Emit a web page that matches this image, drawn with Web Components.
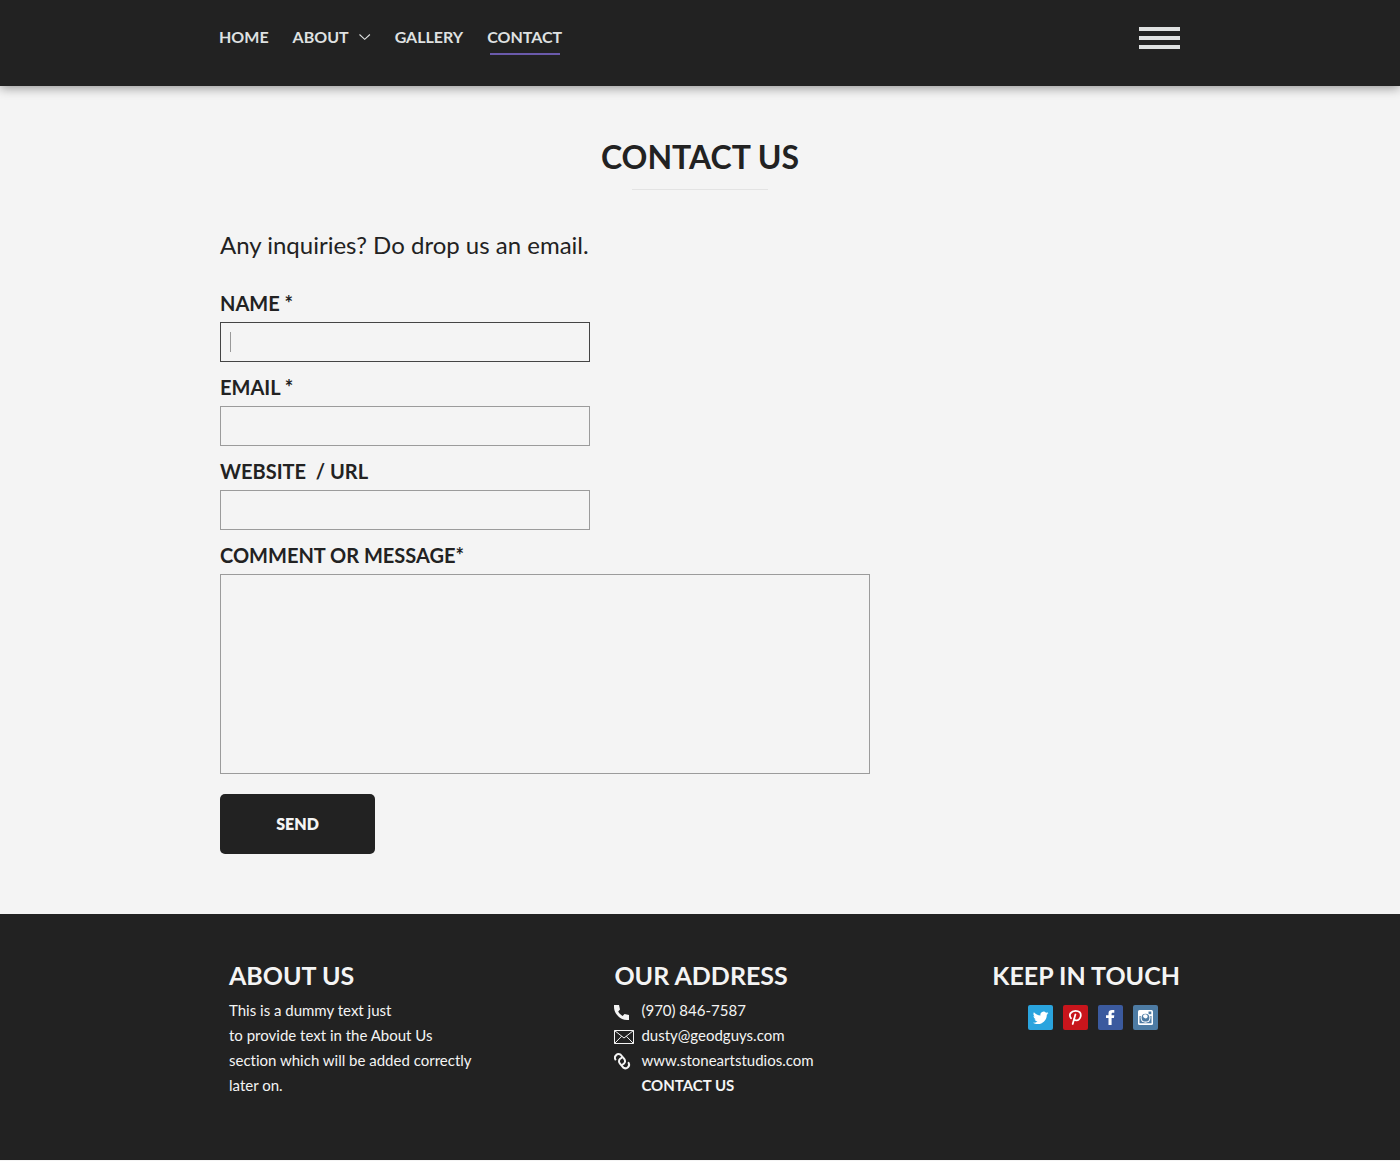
<!DOCTYPE html>
<html lang="en">
<head>
<meta charset="utf-8">
<meta name="viewport" content="width=device-width, initial-scale=1">
<title>Contact Us</title>
<style>
  body {
    margin: 0;
    background: #f4f4f4;
    color: #222;
    font-family: Lato, sans-serif;
    font-variant-ligatures: none;
  }

  main {
    box-sizing: border-box;
    max-width: 960px;
    margin: 0 auto;
  }

  site-footer p {
    margin: 0;
  }
</style>
</head>
<body>
  <site-header>
    <nav-link href="#home">HOME</nav-link>
    <nav-link href="#about" menu>ABOUT</nav-link>
    <nav-link href="#gallery">GALLERY</nav-link>
    <nav-link href="#contact" active>CONTACT</nav-link>
  </site-header>

  <main>
    <page-title>CONTACT US</page-title>
    <contact-form>Any inquiries? Do drop us an email.</contact-form>
  </main>

  <site-footer>
    <footer-column heading="ABOUT US">
      <p>This is a dummy text just<br>to provide text in the About Us<br>section which will be added correctly<br>later on.</p>
    </footer-column>
    <footer-column heading="OUR ADDRESS">
      <contact-line icon="phone" href="tel:9708467587">(970) 846-7587</contact-line>
      <contact-line icon="mail" href="mailto:dusty@geodguys.com">dusty@geodguys.com</contact-line>
      <contact-line icon="link" href="#site">www.stoneartstudios.com</contact-line>
      <contact-line href="#contact" strong>CONTACT US</contact-line>
    </footer-column>
    <footer-column heading="KEEP IN TOUCH">
      <social-links></social-links>
    </footer-column>
  </site-footer>

<script>
class SiteHeader extends HTMLElement {
  constructor() {
    super();
    this.attachShadow({ mode: 'open' });
    this.shadowRoot.innerHTML = `
      <style>
        :host {
          display: block;
          position: relative;
          background: #222;
          box-shadow: 0 2px 10px rgba(0, 0, 0, 0.4);
        }

        header {
          display: flex;
          justify-content: space-between;
          align-items: flex-start;
          box-sizing: border-box;
          max-width: 962px;
          min-height: 86px;
          margin: 0 auto;
          padding: 26px 1px 0 0;
        }

        nav {
          display: flex;
          gap: 24px;
        }

        button {
          display: flex;
          flex-direction: column;
          gap: 5px;
          width: 41px;
          margin: 0;
          padding: 1px 0;
          border: 0;
          background: none;
          cursor: pointer;
        }

        button span {
          height: 4px;
          width: 100%;
          background: #dfe1e1;
        }
      </style>
      <header>
        <nav><slot></slot></nav>
        <button type="button" aria-label="Menu"><span></span><span></span><span></span></button>
      </header>
    `;
  }
}

class NavLink extends HTMLElement {
  constructor() {
    super();
    this.attachShadow({ mode: 'open' });
  }

  connectedCallback() {
    const chevron = `
      <svg width="12" height="8" viewBox="0 0 12 8" aria-hidden="true">
        <path d="M.5 1.500 5.700 6.300l5.200-4.800" fill="none" stroke="#dfe1e1" stroke-width="1.100"/>
      </svg>`;

    this.shadowRoot.innerHTML = `
      <style>
        :host {
          display: block;
        }

        a {
          display: flex;
          align-items: center;
          gap: 10px;
          color: #dfe1e1;
          font-size: 16px;
          font-weight: 700;
          line-height: 21px;
          text-decoration: none;
        }

        :host([active]) a::after {
          content: '';
          width: 70px;
          height: 2px;
          background: #6a5aab;
        }

        :host([active]) a {
          flex-direction: column;
          gap: 6px;
        }
      </style>
      <a href="${this.getAttribute('href')}"><slot></slot>${this.hasAttribute('menu') ? chevron : ''}</a>
    `;
  }
}

class PageTitle extends HTMLElement {
  constructor() {
    super();
    this.attachShadow({ mode: 'open' });
    this.shadowRoot.innerHTML = `
      <style>
        :host {
          display: block;
          padding-top: 51px;
        }

        h1 {
          margin: 0;
          font-size: 32px;
          font-weight: 700;
          line-height: 40px;
          text-align: center;
        }

        hr {
          width: 136px;
          height: 1px;
          margin: 12px auto 0;
          border: 0;
          background: #e3e3e3;
        }
      </style>
      <h1><slot></slot></h1>
      <hr>
    `;
  }
}

class FormField extends HTMLElement {
  constructor() {
    super();
    this.attachShadow({ mode: 'open' });
  }

  connectedCallback() {
    const label = this.getAttribute('label');
    const control = this.hasAttribute('multiline')
      ? '<textarea id="control"></textarea>'
      : `<input id="control" type="${this.getAttribute('type') || 'text'}">`;

    this.shadowRoot.innerHTML = `
      <style>
        :host {
          display: block;
          max-width: 370px;
        }

        :host([multiline]) {
          max-width: 650px;
        }

        label {
          display: block;
          margin-bottom: 7px;
          font-size: 20px;
          font-weight: 700;
          line-height: 24px;
          white-space: pre;
        }

        input,
        textarea {
          display: block;
          box-sizing: border-box;
          width: 100%;
          height: 40px;
          margin: 0;
          padding: 0 9px;
          border: 1px solid #9b9b9b;
          border-radius: 0;
          outline: none;
          background: transparent;
          color: inherit;
          font: 16px Lato, sans-serif;
        }

        textarea {
          height: 200px;
          padding: 9px;
          resize: none;
        }

        /* current field: darker border and a resting text cursor */
        :host([current]) input {
          border-color: #444;
          background: linear-gradient(#999, #999) 9px center / 1px 20px no-repeat;
        }
      </style>
      <label for="control">${label}</label>
      ${control}
    `;
  }
}

class ContactForm extends HTMLElement {
  constructor() {
    super();
    this.attachShadow({ mode: 'open' });
    this.shadowRoot.innerHTML = `
      <style>
        :host {
          display: block;
          padding: 40px 0 60px;
        }

        p {
          margin: 0 0 31px;
          font-size: 24px;
          line-height: 30px;
        }

        form {
          display: grid;
          gap: 13px;
        }

        button {
          width: 155px;
          height: 60px;
          margin: 7px 0 0;
          padding: 0 0 2px;
          border: 0;
          border-radius: 5px;
          background: #222;
          color: #f4f4f4;
          font: 800 16px Lato, sans-serif;
          cursor: pointer;
        }
      </style>
      <p><slot></slot></p>
      <form>
        <form-field label="NAME *" current></form-field>
        <form-field label="EMAIL *" type="email"></form-field>
        <form-field label="WEBSITE  / URL" type="url"></form-field>
        <form-field label="COMMENT OR MESSAGE*" multiline></form-field>
        <button type="submit">SEND</button>
      </form>
    `;

    this.shadowRoot.querySelector('form').addEventListener('submit', (e) => e.preventDefault());
  }
}

class SiteFooter extends HTMLElement {
  constructor() {
    super();
    this.attachShadow({ mode: 'open' });
    this.shadowRoot.innerHTML = `
      <style>
        :host {
          display: block;
          background: #222;
          color: #f4f4f4;
        }

        footer {
          display: grid;
          grid-template-columns: 51fr 50fr auto;
          box-sizing: border-box;
          max-width: 960px;
          min-height: 246px;
          margin: 0 auto;
          padding: 45px 0 60px 9px;
        }
      </style>
      <footer><slot></slot></footer>
    `;
  }
}

class FooterColumn extends HTMLElement {
  constructor() {
    super();
    this.attachShadow({ mode: 'open' });
  }

  connectedCallback() {
    this.shadowRoot.innerHTML = `
      <style>
        :host {
          display: block;
          font-size: 15px;
          line-height: 25px;
        }

        h2 {
          margin: 0 0 7px;
          font-size: 25px;
          font-weight: 700;
          line-height: 32px;
        }
      </style>
      <h2>${this.getAttribute('heading')}</h2>
      <slot></slot>
    `;
  }
}

class ContactLine extends HTMLElement {
  constructor() {
    super();
    this.attachShadow({ mode: 'open' });

    this.icons = {
      phone: '<path d="M0 5h5l1 4.600-1.800 1.900c1.100 2.100 2.500 3.400 4.400 4.400l1.900-1.900L15 15v5h-2C6 20 0 13.500 0 7z" fill="#f4f4f4"/>',
      mail: '<path d="M.5 5.500h19v13H.5zM.5 5.500 10 13l9.500-7.500M.5 18.500l7.200-7.300M19.500 18.500l-7.200-7.300" fill="none" stroke="#f4f4f4"/>',
      link: `<g fill="none" stroke="#f4f4f4" stroke-width="2" stroke-linecap="round">
          <path d="M1.400 9.500C-.4 6.500 3.200 2.600 6.600 4.700l3.600 4.200c1.700 2.300.6 4.700-1.700 5.700"/>
          <path d="M14.600 12.900c1.800 3-1.800 6.900-5.200 4.800l-3.600-4.200c-1.700-2.300-.6-4.700 1.700-5.700"/>
        </g>`
    };
  }

  connectedCallback() {
    const icon = this.icons[this.getAttribute('icon')] || '';

    this.shadowRoot.innerHTML = `
      <style>
        :host {
          display: block;
        }

        a {
          display: flex;
          gap: 7px;
          color: inherit;
          text-decoration: none;
        }

        :host([strong]) {
          font-weight: 700;
        }
      </style>
      <a href="${this.getAttribute('href')}">
        <svg width="20" height="25" viewBox="0 -2 20 25" aria-hidden="true">${icon}</svg>
        <span><slot></slot></span>
      </a>
    `;
  }
}

class SocialLinks extends HTMLElement {
  constructor() {
    super();
    this.attachShadow({ mode: 'open' });

    this.networks = [
      {
        name: 'Twitter',
        color: '#2aa4de',
        art: '<path fill="#fff" d="M20.400 8.100c-.6.3-1.200.4-1.800.5.700-.4 1.100-1 1.400-1.700-.6.400-1.300.6-2 .8a3.200 3.200 0 0 0-5.500 2.900c-2.600-.1-5-1.400-6.600-3.300-.9 1.500-.4 3.300 1 4.200-.5 0-1-.1-1.400-.4 0 1.500 1.100 2.800 2.500 3.100-.5.1-1 .1-1.400 0 .4 1.300 1.600 2.200 2.900 2.200A6.400 6.400 0 0 1 4.800 17.700c1.500.9 3.100 1.400 4.900 1.400 5.900 0 9.300-5 9.100-9.400.6-.4 1.200-1 1.600-1.600z"/>'
      },
      {
        name: 'Pinterest',
        color: '#c8151c',
        art: '<path fill="none" stroke="#fff" stroke-width="1.800" stroke-linecap="round" d="M8 13.200C5.100 9.500 8.400 5.800 12.500 5.800c3.600 0 5.700 2.100 5.200 5.200-.4 3-2.500 4.700-4.600 4.400-1.200-.1-1.900-.8-2.100-1.500M12.400 9.500 9.700 19"/>'
      },
      {
        name: 'Facebook',
        color: '#3b5a9e',
        art: '<path fill="#fff" d="M10.500 20v-7H8v-2.800h2.500V8.300C10.500 6 11.900 5 14 5h2.300v2.800h-1.500c-.9 0-1.200.4-1.200 1.100v1.300h2.700l-.4 2.800h-2.300v7z"/>'
      },
      {
        name: 'Instagram',
        color: '#4d7ba3',
        art: `<rect x="5" y="5" width="15" height="15" rx="1.500" fill="#fff"/>
          <path fill="#4d7ba3" d="M6.500 11h2.200v7.200H6.500zM16.300 11h2.200v7.200h-2.200zM6.500 16.400h12v1.800h-12zM15.500 6.500h2.800v2.800h-2.800z"/>
          <circle cx="12.500" cy="12.700" r="5" fill="#fff"/>
          <circle cx="12.500" cy="12.700" r="3.900" fill="#4d7ba3"/>
          <path fill="#fff" d="M10.200 10.400a3 3 0 0 1 4.200 0c.8 1-.1 3-1.900 3s-3-2-2.300-3z"/>`
      }
    ];

    this.shadowRoot.innerHTML = `
      <style>
        :host {
          display: flex;
          justify-content: center;
          gap: 10px;
          padding: 7px 0 0 14px;
        }

        a {
          display: block;
          width: 25px;
          height: 25px;
          border-radius: 2px;
        }

        svg {
          display: block;
        }
      </style>
      ${this.networks.map(network => `
        <a href="#${network.name.toLowerCase()}" aria-label="${network.name}" style="background: ${network.color}">
          <svg width="25" height="25" viewBox="0 0 25 25" aria-hidden="true">${network.art}</svg>
        </a>
      `).join('')}
    `;
  }
}

customElements.define('site-header', SiteHeader);
customElements.define('nav-link', NavLink);
customElements.define('page-title', PageTitle);
customElements.define('form-field', FormField);
customElements.define('contact-form', ContactForm);
customElements.define('site-footer', SiteFooter);
customElements.define('footer-column', FooterColumn);
customElements.define('contact-line', ContactLine);
customElements.define('social-links', SocialLinks);
</script>
</body>
</html>
